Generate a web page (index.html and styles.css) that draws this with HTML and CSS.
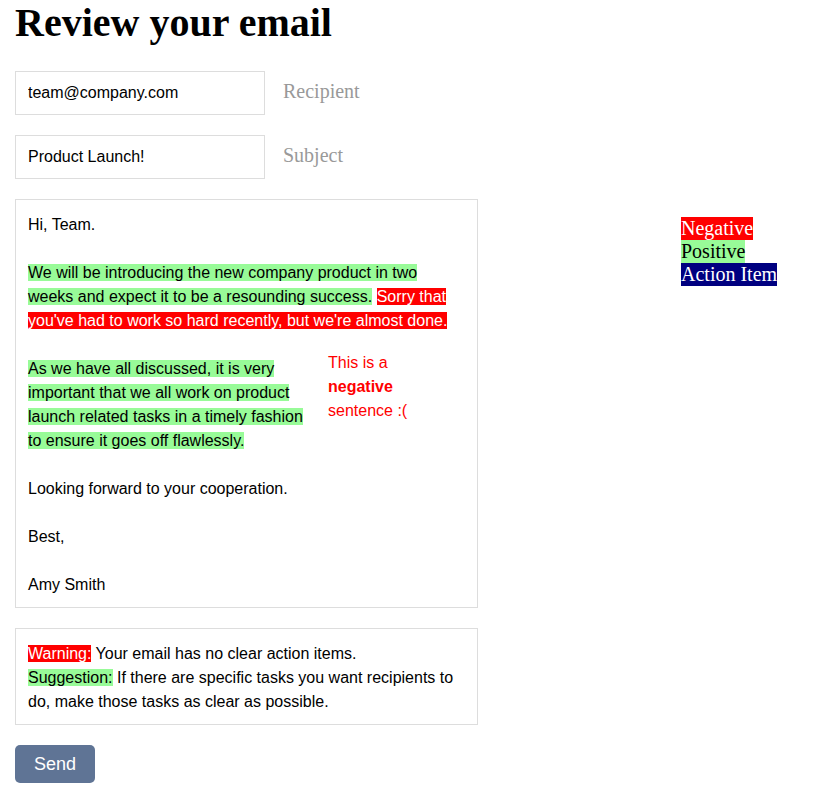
FILE: index.html
```html
<!DOCTYPE html>
<html lang="en">
<head>
    <meta charset="UTF-8">
    <title>Review your email</title>
    <link rel="stylesheet" href="styles.css">
</head>
<body>
    <div class="page">
        <div class="main">
            <h1>Review your email</h1>

            <div class="field">
                <input type="text" value="team@company.com">
                <span class="field-label">Recipient</span>
            </div>

            <div class="field">
                <input type="text" value="Product Launch!">
                <span class="field-label">Subject</span>
            </div>

            <div class="email-body">
                <p>Hi, Team.</p>
                <p><span class="positive">We will be introducing the new company product in two weeks and expect it to be a resounding success.</span> <span class="negative">Sorry that you've had to work so hard recently, but we're almost done.</span></p>
                <div class="row">
                    <p class="narrow"><span class="positive">As we have all discussed, it is very important that we all work on product launch related tasks in a timely fashion to ensure it goes off flawlessly.</span></p>
                    <div class="note">This is a <b>negative</b> sentence :(</div>
                </div>
                <p>Looking forward to your cooperation.</p>
                <p>Best,</p>
                <p>Amy Smith</p>
            </div>

            <div class="feedback">
                <span class="negative">Warning:</span> Your email has no clear action items.<br>
                <span class="positive">Suggestion:</span> If there are specific tasks you want recipients to do, make those tasks as clear as possible.
            </div>

            <button class="send">Send</button>
        </div>

        <div class="legend">
            <span class="negative">Negative</span>
            <span class="positive">Positive</span>
            <span class="action">Action Item</span>
        </div>
    </div>
</body>
</html>
```

FILE: styles.css
```css
* {
    box-sizing: border-box;
}

body {
    margin: 0;
    font-family: "Liberation Serif", serif;
    color: #000;
    background: #fff;
}

.page {
    display: flex;
    padding: 0 15px;
}

.main {
    width: 463px;
}

h1 {
    margin: 0 0 25px;
    font-size: 40px;
    line-height: 46px;
}

.field {
    display: flex;
    align-items: center;
    gap: 18px;
    margin-bottom: 20px;
}

.field input {
    width: 250px;
    height: 44px;
    padding: 0 12px;
    border: 1px solid #ddd;
    font-family: "Liberation Sans", sans-serif;
    font-size: 16px;
    color: #000;
    outline: none;
}

.field-label {
    font-size: 20px;
    color: #999;
    margin-top: -3px;
}

.email-body,
.feedback {
    border: 1px solid #ddd;
    padding: 13px 12px 10px;
    font-family: "Liberation Sans", sans-serif;
    font-size: 16px;
    line-height: 24px;
}

.email-body p {
    margin: 0 0 24px;
}

.email-body p:last-child {
    margin-bottom: 0;
}

.row {
    display: flex;
    gap: 10px;
}

.narrow {
    width: 290px;
}

.note {
    width: 90px;
    color: #f00;
    margin-top: -6px;
}

.feedback {
    margin-top: 20px;
}

.positive {
    background: #98fb98;
}

.negative {
    background: #f00;
    color: #fff;
}

.action {
    background: #000080;
    color: #fff;
}

.send {
    margin-top: 20px;
    width: 80px;
    height: 38px;
    border: none;
    border-radius: 5px;
    background: #5f7495;
    color: #fff;
    font-family: "Liberation Sans", sans-serif;
    font-size: 18px;
    cursor: pointer;
}

.legend {
    display: flex;
    flex-direction: column;
    align-items: flex-start;
    margin-left: 203px;
    padding-top: 217px;
    font-size: 20px;
    line-height: 23px;
}
```
